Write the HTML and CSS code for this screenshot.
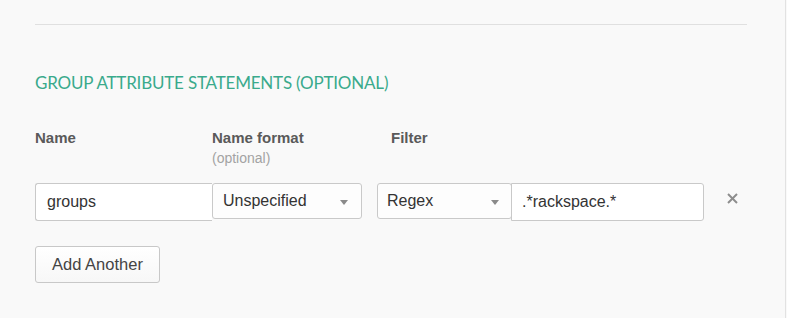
FILE: index.html
```html
<!DOCTYPE html>
<html lang="en">
<head>
  <meta charset="UTF-8">
  <meta name="viewport" content="width=device-width, initial-scale=1.0">
  <title>Group Attribute Statements</title>
  <link rel="stylesheet" href="styles.css">
</head>
<body>
  <div class="panel">
    <hr class="divider">

    <h2 class="section-title">GROUP ATTRIBUTE STATEMENTS (OPTIONAL)</h2>

    <div class="attr-grid">
      <!-- header row -->
      <div class="col-label">Name</div>
      <div class="col-label">Name format<span class="hint">(optional)</span></div>
      <div class="col-label filter-label">Filter</div>
      <div></div>

      <!-- statement row -->
      <div class="field text-field first">groups</div>
      <div class="field select-field joined">
        <span>Unspecified</span>
        <span class="caret"></span>
      </div>
      <div class="filter-pair">
        <div class="field select-field">
          <span>Regex</span>
          <span class="caret"></span>
        </div>
        <div class="field text-field last">.*rackspace.*</div>
      </div>
      <div class="remove">
        <svg width="11" height="11" viewBox="0 0 11 11">
          <line x1="1" y1="1" x2="10" y2="10" />
          <line x1="10" y1="1" x2="1" y2="10" />
        </svg>
      </div>
    </div>

    <button class="btn">Add Another</button>
  </div>
</body>
</html>
```
FILE: styles.css
```css
body {
  margin: 0;
  background: #f9f9f9;
  font-family: "Liberation Sans", Arial, sans-serif;
  color: #333;
}

.panel {
  width: 786px;
  height: 318px;
  box-sizing: border-box;
  border-right: 1px solid #e2e2e2;
  padding: 24px 0 0 35px;
}

.divider {
  width: 712px;
  margin: 0;
  border: 0;
  border-top: 1px solid #e0e0e0;
}

.section-title {
  margin: 48px 0 0;
  font-family: Lato, "Open Sans", sans-serif;
  font-weight: 400;
  font-size: 17px;
  letter-spacing: -0.2px;
  color: #3aaa8c;
  line-height: 20px;
}

.attr-grid {
  display: grid;
  grid-template-columns: 177px 150px 342px 40px;
  margin-top: 35px;
}

.col-label {
  font-weight: bold;
  font-size: 15px;
  color: #5a5a5a;
  line-height: 20px;
}

.filter-label {
  padding-left: 29px;
}

.hint {
  display: block;
  font-weight: normal;
  font-size: 14px;
  color: #a3a3a3;
}

.field {
  box-sizing: border-box;
  height: 38px;
  border: 1px solid #c9c9c9;
  background: #fff;
  font-size: 16px;
  color: #333;
  display: flex;
  align-items: center;
  padding: 0 11px;
}

.text-field.first {
  margin-top: 15px;
  border-radius: 3px 0 0 3px;
  border-right: 0;
}

.select-field {
  justify-content: space-between;
  height: 36px;
  border-radius: 3px;
  background: #fdfdfd;
}

.select-field.joined {
  margin-top: 15px;
  padding-left: 10px;
  padding-right: 13px;
}

.filter-pair {
  margin-top: 15px;
  margin-left: 15px;
  display: flex;
  align-items: flex-start;
}

.filter-pair .select-field {
  flex: none;
  width: 135px;
  padding-left: 9px;
  padding-right: 12px;
}

.text-field.last {
  flex: none;
  width: 193px;
  height: 38px;
  margin-left: -1px;
  border-radius: 0 3px 3px 0;
  padding-left: 10px;
}

.caret {
  width: 0;
  height: 0;
  border-left: 4px solid transparent;
  border-right: 4px solid transparent;
  border-top: 5px solid #8a8a8a;
  margin-top: 2px;
}

.remove {
  margin-top: 15px;
  display: flex;
  align-items: center;
  padding-left: 23px;
  height: 30px;
}

.remove svg {
  stroke: #8d8d8d;
  stroke-width: 2;
}

.btn {
  display: block;
  margin-top: 25px;
  width: 125px;
  height: 37px;
  border: 1px solid #c8c8c8;
  border-radius: 3px;
  background: linear-gradient(#ffffff, #f7f7f7);
  font-family: "Liberation Sans", Arial, sans-serif;
  font-size: 16.5px;
  color: #444;
  padding: 0;
}
```
